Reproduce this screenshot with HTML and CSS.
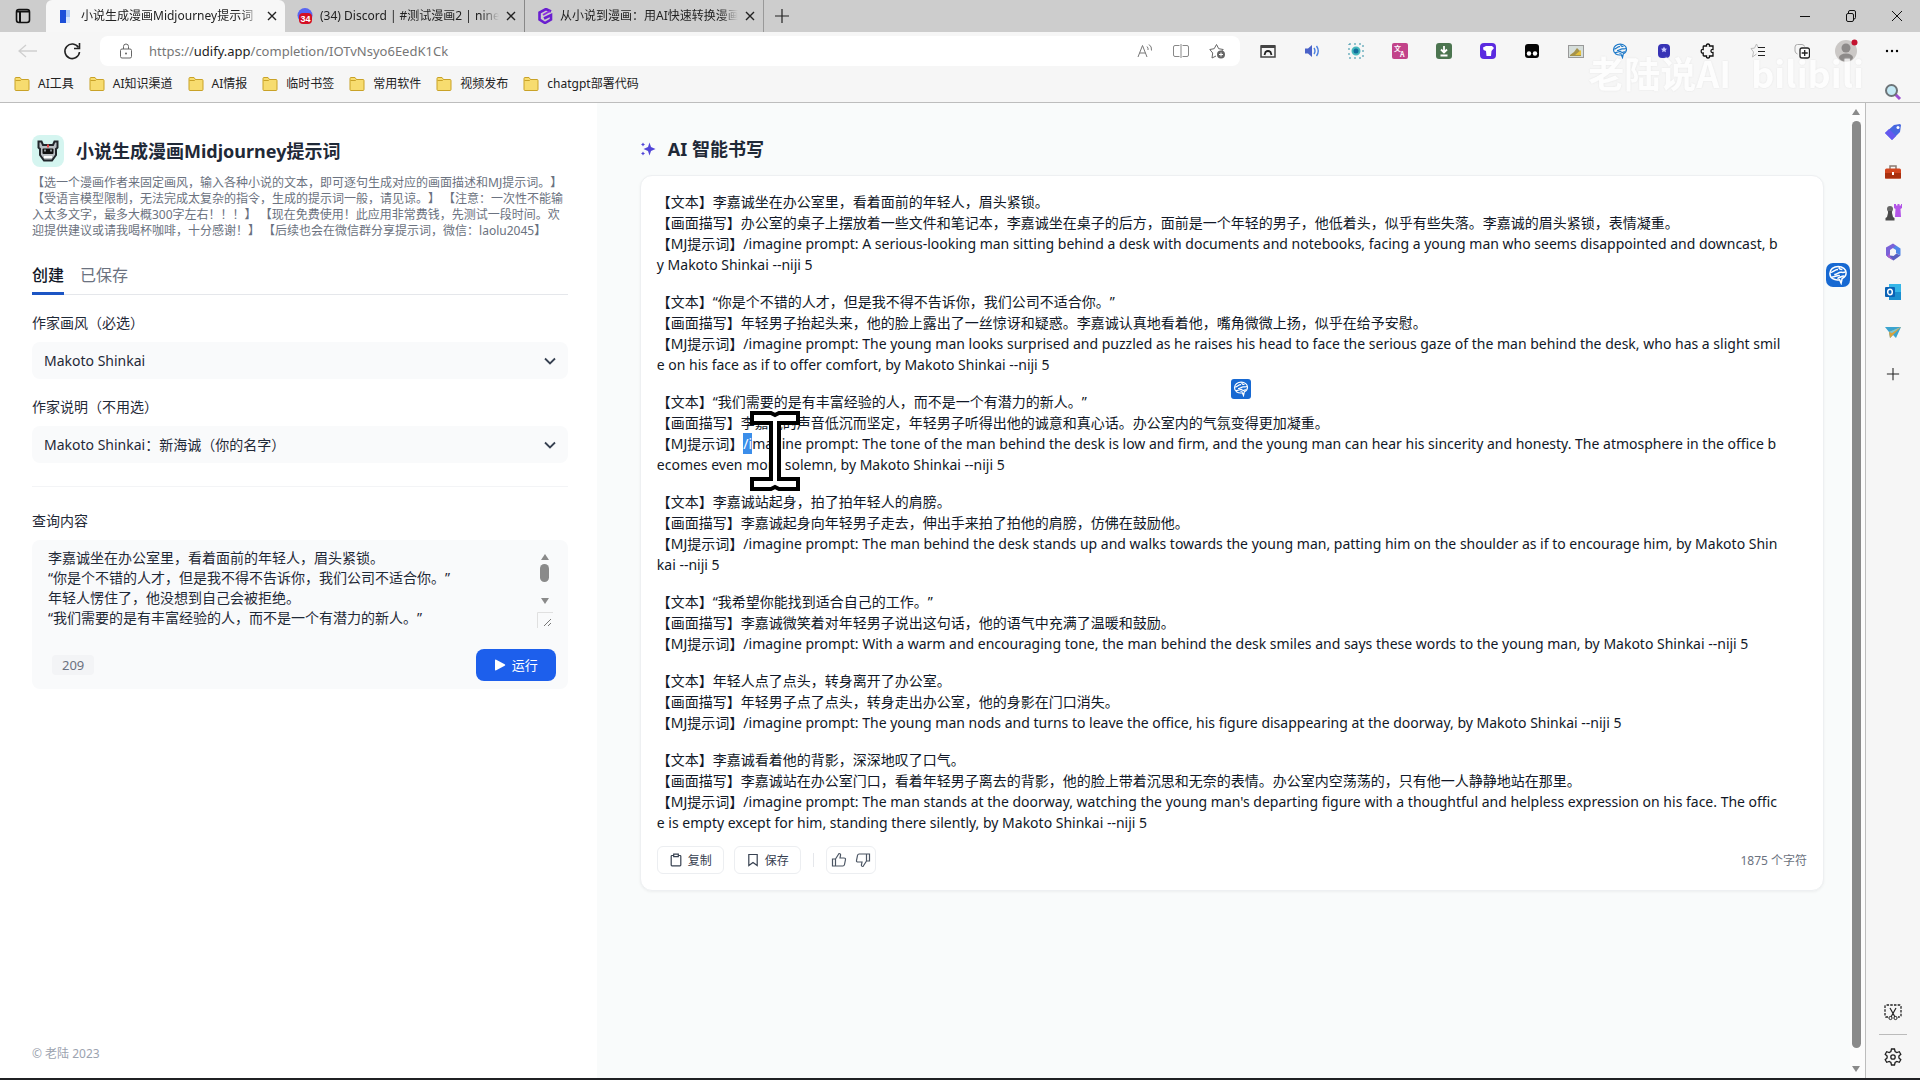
FILE: index.html
```html
<!DOCTYPE html>
<html lang="zh-CN">
<head>
<meta charset="utf-8">
<title>小说生成漫画Midjourney提示词</title>
<link rel="stylesheet" href="styles.css">
</head>
<body>
<svg class="defs" aria-hidden="true">
  <symbol id="folder" viewBox="0 0 16 16"><path d="M1 2.500q0-1 1-1h4l1.500 2h6.500q1 0 1 1v9q0 1-1 1H2q-1 0-1-1z" fill="#f7dc6f" stroke="#c9a227"/><path d="M1.500 4.500h5l1-1" fill="none" stroke="#c9a227"/></symbol>
  <symbol id="close" viewBox="0 0 16 16"><path d="M4 4l8 8M12 4l-8 8" stroke="#222" stroke-width="1.400"/></symbol>
  <symbol id="plus" viewBox="0 0 16 16"><path d="M8 1v14M1 8h14" stroke="#222" stroke-width="1.200"/></symbol>
  <symbol id="chevron" viewBox="0 0 16 16"><path d="M3 5.500l5 5 5-5" fill="none" stroke="#374151" stroke-width="1.800"/></symbol>
  <symbol id="brain" viewBox="0 0 16 16"><path d="M10.500 14.500L9.300 11.800C5 12.600 1.500 10.500 1.500 6.800 1.500 3.500 4.500 1.200 8.200 1.200c3.600 0 6.300 2.200 6.300 5 0 2.300-1.500 3.800-3.200 4.600z" fill="none" stroke="currentColor" stroke-width="1.200"/><path d="M2 6c2 0 3.500-2.500 6-2.300M5 7.500c2 .3 3.500-2 5.500-1.700 1.300.2 2 .4 3.500-.3M3 9.500c2 .5 4-1.500 6.500-1M7.500 10.500c1.500.2 3-1.800 5.500-1.700M9 1.500c-.5 1.500.5 2 2.500 2" fill="none" stroke="currentColor" stroke-width="1.200"/></symbol>
</svg>

<header class="chrome">
  <div class="tabstrip">
    <button class="icon-btn workspace" aria-label="标签页操作"><svg viewBox="0 0 16 16"><rect x="1.500" y="1.500" width="13" height="13" rx="2.500" fill="none" stroke="#111" stroke-width="1.600"/><path d="M2 3.500h12M5 4v10" stroke="#111" stroke-width="2"/></svg></button>
    <div class="tab active">
      <svg viewBox="0 0 16 16"><path d="M2 2h6v13H2z" fill="#1d4fd8"/><path d="M8 2h4v7H8z" fill="#a9c8f7"/><path d="M8 9h4v6H8z" fill="#dbe8fb"/></svg>
      <span class="tab-title">小说生成漫画Midjourney提示词</span>
      <button class="icon-btn" aria-label="关闭"><svg><use href="#close"/></svg></button>
    </div>
    <div class="tab">
      <svg viewBox="0 0 16 16"><circle cx="8" cy="7.500" r="7.500" fill="#5865f2"/><rect x="2" y="5" width="13" height="11" rx="4" fill="#d40f24"/><text x="3.500" y="14" class="badge-text">34</text></svg>
      <span class="tab-title">(34) Discord | #测试漫画2 | nineB</span>
      <button class="icon-btn" aria-label="关闭"><svg><use href="#close"/></svg></button>
    </div>
    <div class="tab">
      <svg viewBox="0 0 16 16"><path d="M14 3.500L9 1 2.500 4.500v7L8 15l6-3.500V7L7 10.500" fill="none" stroke="#6a1fd0" stroke-width="2.600"/><path d="M6 7l7-4" stroke="#8e2de2" stroke-width="2"/></svg>
      <span class="tab-title">从小说到漫画：用AI快速转换漫画</span>
      <button class="icon-btn" aria-label="关闭"><svg><use href="#close"/></svg></button>
    </div>
    <button class="icon-btn new-tab" aria-label="新建标签页"><svg><use href="#plus"/></svg></button>
    <div class="window-controls">
      <button class="icon-btn" aria-label="最小化"><svg viewBox="0 0 16 16"><path d="M3 8.500h10" stroke="#111"/></svg></button>
      <button class="icon-btn" aria-label="还原"><svg viewBox="0 0 16 16"><rect x="3.500" y="5.500" width="7" height="8" rx="1.500" fill="none" stroke="#111"/><path d="M5.500 5V4q0-1.500 1.500-1.500h4q1.500 0 1.500 1.500v5.500q0 1.500-1.500 1.500" fill="none" stroke="#111"/></svg></button>
      <button class="icon-btn" aria-label="关闭窗口"><svg viewBox="0 0 16 16"><path d="M3 3l10 10M13 3L3 13" stroke="#111"/></svg></button>
    </div>
  </div>

  <div class="toolbar">
    <button class="icon-btn" aria-label="后退"><svg viewBox="0 0 20 20"><path d="M1 10h18M8 4l-7 6 7 6" fill="none" stroke="#cfcfcf" stroke-width="1.300"/></svg></button>
    <button class="icon-btn" aria-label="刷新"><svg viewBox="0 0 20 20"><path d="M16.500 6.500A7.300 7.300 0 1 0 17.500 11" fill="none" stroke="#222" stroke-width="1.600"/><path d="M17.500 2v5.500h-5.500" fill="none" stroke="#222" stroke-width="1.600"/></svg></button>
    <div class="address">
      <svg viewBox="0 0 16 16"><rect x="2.500" y="6" width="11" height="9" rx="1.500" fill="none" stroke="#666"/><path d="M5.500 6V3.500a2.500 2.500 0 0 1 5 0V6" fill="none" stroke="#666"/><circle cx="8" cy="10.500" r="1" fill="#666"/></svg>
      <a class="url" href="https://udify.app/completion/IOTvNsyo6EedK1Ck">https://<b>udify.app</b>/completion/IOTvNsyo6EedK1Ck</a>
      <div class="address-actions">
        <svg viewBox="0 0 16 16"><path d="M1 14L5.500 2.500 10 14M2.600 10h5.800M10 3.500q1.500 1.500 1 3.500M12 1.500q3 2 2.500 6" fill="none" stroke="#777"/></svg>
        <svg viewBox="0 0 16 16"><path d="M6.500 2.500H2q-1.500 0-1.500 1.500v8q0 1.500 1.500 1.500h4.500M9.500 2.500H14q1.500 0 1.500 1.500v8q0 1.500-1.500 1.500H9.500M8 1v14" fill="none" stroke="#888"/></svg>
        <svg viewBox="0 0 16 16"><path d="M7 13L3 15l.7-5L.8 6.500l4.400-.8L7.500 1.500l2.200 4.200 4.500.8-2 2" fill="none" stroke="#666"/><circle cx="12" cy="11.500" r="4" fill="#666"/><path d="M12 9.500v4M10 11.500h4" stroke="#fff"/></svg>
      </div>
    </div>
    <div class="extensions">
      <svg viewBox="0 0 16 16"><path d="M1 3h14v11H1z" fill="none" stroke="#444" stroke-width="1.500"/><path d="M1 3.500h14" stroke="#444" stroke-width="3"/><path d="M4.500 12l1-3q2.500-2 5 0l1 3" fill="none" stroke="#222" stroke-width="1.800"/></svg>
      <svg viewBox="0 0 16 16"><path d="M1 5.500h3L8 2v12l-4-3.500H1z" fill="#4a62c8"/><path d="M10 5q2 3 0 6M12.500 3q3.500 5 0 10" fill="none" stroke="#4a7fe0" stroke-width="1.400"/></svg>
      <svg viewBox="0 0 16 16"><rect x="1" y="1" width="14" height="14" fill="none" stroke="#2e8fa5" stroke-dasharray="2 3"/><circle cx="8" cy="8" r="3.500" fill="#126e9c" stroke="#45b7bd" stroke-width="2"/></svg>
      <svg viewBox="0 0 16 16"><rect width="16" height="16" rx="2" fill="#c2438a"/><text x="2" y="8" class="glyph-sm">文</text><text x="8" y="14" class="glyph-sm">A</text></svg>
      <svg viewBox="0 0 16 16"><rect width="16" height="16" rx="3" fill="#4c7550"/><path d="M8 3v6M5 6.500l3 3 3-3M4.500 12.500h7" fill="none" stroke="#fff" stroke-width="1.800"/></svg>
      <svg viewBox="0 0 16 16"><rect width="16" height="16" rx="4" fill="#5b2be0"/><path d="M3 4.500L6 3h6l2 2-2.500 3-.5 5H6.500L6 8 3.500 7z" fill="#fff"/></svg>
      <svg viewBox="0 0 16 16"><rect x="1" y="1" width="14" height="14" rx="3" fill="#050505"/><circle cx="5" cy="10.500" r="2.200" fill="#fff"/><circle cx="11" cy="10.500" r="2.200" fill="#fff"/></svg>
      <svg viewBox="0 0 16 16"><rect x=".5" y="2.500" width="15" height="12" fill="#d6dedb" stroke="#999"/><path d="M2 12l4-3 3-4 4 4v4H2z" fill="#a5924a"/><path d="M7 12l6-5v5z" fill="#e3c03b"/></svg>
      <svg class="blue"><use href="#brain"/></svg>
      <svg viewBox="0 0 16 16"><rect x="2" y="1" width="12" height="14" rx="4" fill="#3733b5"/><path d="M8 3.500l1 2 2 .3-1.500 1.400.4 2L8 8.300l-1.900.9.400-2L5 5.800l2-.3z" fill="#c9c8ff"/></svg>
      <svg viewBox="0 0 16 16"><path d="M4 3h2.500q-.3-2 1.500-2t1.500 2H13v3.500q-2-.3-2 1.500t2 1.500V13H9.500q.3 2-1.500 2t-1.500-2H4q-.8 0-.8-.8V10q-2 .3-2-1.800t2-1.700V3.800Q3.200 3 4 3z" fill="none" stroke="#111" stroke-width="1.300"/></svg>
      <svg class="after-divider" viewBox="0 0 16 16"><path d="M6.500 11L2.500 14l1-5L1 5.500l3.500-.4L6.500 1l1.800 4" fill="none" stroke="#bbb"/><path d="M8 4.500h7M8 8.500h7M8 12.500h7" stroke="#222" stroke-width="1.200"/></svg>
      <svg viewBox="0 0 16 16"><path d="M3.500 11Q1 10 1 8V4q0-2.500 2.500-2.500H8q2 0 2.500 2" fill="none" stroke="#aaa"/><rect x="6" y="5" width="9.500" height="10" rx="2" fill="#fff" stroke="#222" stroke-width="1.300"/><path d="M10.700 7v6M7.700 10h6" stroke="#222" stroke-width="1.300"/></svg>
      <svg class="avatar" viewBox="0 0 24 24"><circle cx="12" cy="12" r="11" fill="#cbc8c6"/><circle cx="12" cy="9" r="4.500" fill="#8d8a89"/><ellipse cx="12" cy="18.500" rx="7" ry="4" fill="#8d8a89"/><circle cx="20.500" cy="3.500" r="3" fill="#c4122f"/></svg>
      <svg viewBox="0 0 16 16"><circle cx="3" cy="8" r="1.200"/><circle cx="8" cy="8" r="1.200"/><circle cx="13" cy="8" r="1.200"/></svg>
    </div>
  </div>

  <nav class="bookmarks">
    <a href="#"><svg><use href="#folder"/></svg>AI工具</a>
    <a href="#"><svg><use href="#folder"/></svg>AI知识渠道</a>
    <a href="#"><svg><use href="#folder"/></svg>AI情报</a>
    <a href="#"><svg><use href="#folder"/></svg>临时书签</a>
    <a href="#"><svg><use href="#folder"/></svg>常用软件</a>
    <a href="#"><svg><use href="#folder"/></svg>视频发布</a>
    <a href="#"><svg><use href="#folder"/></svg>chatgpt部署代码</a>
  </nav>
  <div class="watermark"><span>老陆说AI</span><span class="site">bilibili</span></div>
</header>

<div class="window-body">
  <div class="page">
    <section class="panel">
      <div class="app-head">
        <div class="app-icon"><svg viewBox="0 0 24 24"><path d="M2.500 2.500h3L7 6h10l1.500-3.500h3v6L20 10v6l-4 5.500H8L4 16v-6L2.500 8.500z" fill="#b9bec2" stroke="#22262b" stroke-width="2"/><rect x="6.500" y="9.500" width="11" height="5.500" rx="1" fill="#111"/><path d="M12 5.500v3" stroke="#e64646" stroke-width="2"/><path d="M8 18h8" stroke="#fff" stroke-width="2"/><path d="M8 10.500h2v2H8zM14 10.500h2v2h-2z" fill="#8a9095"/></svg></div>
        <h1>小说生成漫画Midjourney提示词</h1>
      </div>
      <p class="desc">【选一个漫画作者来固定画风，输入各种小说的文本，即可逐句生成对应的画面描述和MJ提示词。】<br>【受语言模型限制，无法完成太复杂的指令，生成的提示词一般，请见谅。】 【注意：一次性不能输<br>入太多文字，最多大概300字左右！！！】 【现在免费使用！此应用非常费钱，先测试一段时间。欢<br>迎提供建议或请我喝杯咖啡，十分感谢！】 【后续也会在微信群分享提示词，微信：laolu2045】</p>
      <div class="modes"><button class="current">创建</button><button>已保存</button></div>
      <form class="form">
        <label for="style">作家画风（必选）</label>
        <div class="select"><select id="style"><option>Makoto Shinkai</option></select><svg><use href="#chevron"/></svg></div>
        <label for="about">作家说明（不用选）</label>
        <div class="select"><select id="about"><option>Makoto Shinkai：新海诚（你的名字）</option></select><svg><use href="#chevron"/></svg></div>
        <hr>
        <label for="query">查询内容</label>
        <div class="query">
          <div class="query-text">
            <textarea id="query" rows="4">李嘉诚坐在办公室里，看着面前的年轻人，眉头紧锁。
“你是个不错的人才，但是我不得不告诉你，我们公司不适合你。”
年轻人愣住了，他没想到自己会被拒绝。
“我们需要的是有丰富经验的人，而不是一个有潜力的新人。”</textarea>
            <div class="query-scroll"><i class="up"></i><i class="thumb"></i><i class="down"></i><svg viewBox="0 0 16 16"><path d="M.5 16V.5H16" fill="none" stroke="#e0e0e0"/><path d="M7 14l7-7M11 14l3-3" stroke="#777"/></svg></div>
          </div>
          <div class="query-foot"><span class="count">209</span><button type="button" class="run"><svg viewBox="0 0 12 12"><path d="M1 1.500q0-1.300 1.200-.7l8.500 4.500q1.200.7 0 1.400l-8.500 4.500Q1 11.800 1 10.500z" fill="#fff"/></svg>运行</button></div>
        </div>
      </form>
      <footer>© 老陆 2023</footer>
    </section>

    <main class="result">
      <h2><svg viewBox="0 0 16 16"><path d="M9.500 1.500l1.500 4.500 4.500 2-4.500 2-1.500 4.500L8 10 3.500 8 8 6z" fill="#5145d8"/><path d="M3 1.500l.7 1.300 1.300.7-1.300.7L3 5.500l-.7-1.300L1 3.500l1.300-.7zM3 10.500l.7 1.300 1.300.7-1.300.7-.7 1.300-.7-1.300-1.300-.7 1.300-.7z" fill="#5145d8"/></svg>AI 智能书写</h2>
      <article class="card">
        <p>【文本】李嘉诚坐在办公室里，看着面前的年轻人，眉头紧锁。<br>【画面描写】办公室的桌子上摆放着一些文件和笔记本，李嘉诚坐在桌子的后方，面前是一个年轻的男子，他低着头，似乎有些失落。李嘉诚的眉头紧锁，表情凝重。<br>【MJ提示词】/imagine prompt: A serious-looking man sitting behind a desk with documents and notebooks, facing a young man who seems disappointed and downcast, b<br>y Makoto Shinkai --niji 5</p>
        <p>【文本】“你是个不错的人才，但是我不得不告诉你，我们公司不适合你。”<br>【画面描写】年轻男子抬起头来，他的脸上露出了一丝惊讶和疑惑。李嘉诚认真地看着他，嘴角微微上扬，似乎在给予安慰。<br>【MJ提示词】/imagine prompt: The young man looks surprised and puzzled as he raises his head to face the serious gaze of the man behind the desk, who has a slight smil<br>e on his face as if to offer comfort, by Makoto Shinkai --niji 5</p>
        <p>【文本】“我们需要的是有丰富经验的人，而不是一个有潜力的新人。”<br>【画面描写】李嘉诚的声音低沉而坚定，年轻男子听得出他的诚意和真心话。办公室内的气氛变得更加凝重。<br>【MJ提示词】<mark>/i</mark>magine prompt: The tone of the man behind the desk is low and firm, and the young man can hear his sincerity and honesty. The atmosphere in the office b<br>ecomes even more solemn, by Makoto Shinkai --niji 5</p>
        <p>【文本】李嘉诚站起身，拍了拍年轻人的肩膀。<br>【画面描写】李嘉诚起身向年轻男子走去，伸出手来拍了拍他的肩膀，仿佛在鼓励他。<br>【MJ提示词】/imagine prompt: The man behind the desk stands up and walks towards the young man, patting him on the shoulder as if to encourage him, by Makoto Shin<br>kai --niji 5</p>
        <p>【文本】“我希望你能找到适合自己的工作。”<br>【画面描写】李嘉诚微笑着对年轻男子说出这句话，他的语气中充满了温暖和鼓励。<br>【MJ提示词】/imagine prompt: With a warm and encouraging tone, the man behind the desk smiles and says these words to the young man, by Makoto Shinkai --niji 5</p>
        <p>【文本】年轻人点了点头，转身离开了办公室。<br>【画面描写】年轻男子点了点头，转身走出办公室，他的身影在门口消失。<br>【MJ提示词】/imagine prompt: The young man nods and turns to leave the office, his figure disappearing at the doorway, by Makoto Shinkai --niji 5</p>
        <p>【文本】李嘉诚看着他的背影，深深地叹了口气。<br>【画面描写】李嘉诚站在办公室门口，看着年轻男子离去的背影，他的脸上带着沉思和无奈的表情。办公室内空荡荡的，只有他一人静静地站在那里。<br>【MJ提示词】/imagine prompt: The man stands at the doorway, watching the young man's departing figure with a thoughtful and helpless expression on his face. The offic<br>e is empty except for him, standing there silently, by Makoto Shinkai --niji 5</p>
        <div class="actions">
          <button class="action"><svg viewBox="0 0 14 14"><path d="M4.500 2.500H3q-.8 0-.8.800v8.700q0 .8.800.8h8q.8 0 .8-.8V3.300q0-.8-.8-.8H9.500M4.700 1.200h4.600v2.500H4.700z" fill="none" stroke="#374151" stroke-width="1.200"/></svg>复制</button>
          <button class="action"><svg viewBox="0 0 14 14"><path d="M2.800 1.500h8.400v11L7 9.500l-4.200 3z" fill="none" stroke="#374151" stroke-width="1.200"/></svg>保存</button>
          <span class="sep"></span>
          <div class="votes">
            <button aria-label="赞"><svg viewBox="0 0 16 16"><path d="M1.500 7h3v7h-3zM4.500 7L8 1.500q2 0 1.500 2L9 6h4q1.700 0 1.500 1.500l-1 5Q13.200 14 11.800 14H4.500" fill="none" stroke="#4b5563" stroke-width="1.200"/></svg></button>
            <button aria-label="踩"><svg viewBox="0 0 16 16"><path d="M14.500 9h-3V2h3zM11.500 9L8 14.500q-2 0-1.500-2L7 10H3q-1.700 0-1.500-1.500l1-5Q2.800 2 4.200 2h7.300" fill="none" stroke="#4b5563" stroke-width="1.200"/></svg></button>
          </div>
          <span class="chars">1875 个字符</span>
        </div>
        <svg class="ibeam" viewBox="0 0 50 80"><path d="M2 2h19l4 2 4-2h19v10H29v56h19v10H29l-4-2-4 2H2V68h19V12H2z" fill="#fff" stroke="#000" stroke-width="4"/></svg>
        <span class="ai-pop"><svg><use href="#brain"/></svg></span>
      </article>
      <span class="ai-float"><svg><use href="#brain"/></svg></span>
    </main>
    <div class="scrollbar"><i class="up"></i><i class="thumb"></i><i class="down"></i></div>
  </div>

  <aside class="sidebar">
    <svg viewBox="0 0 18 18"><path d="M11 11l5 5" stroke="#9b4fd0" stroke-width="3"/><circle cx="7.500" cy="7.500" r="5.500" fill="#c4e9f5" stroke="#6d7478" stroke-width="2"/></svg>
    <svg viewBox="0 0 18 18"><path d="M10 2l6-1 1 1-1 7-8 8-7-7z" fill="#4768e0"/><path d="M1 10l4-4 7 7-4 4z" fill="#6558ef"/><circle cx="14" cy="4.500" r="1.500" fill="#fff"/></svg>
    <svg viewBox="0 0 18 18"><path d="M6 6V3h6v3" fill="none" stroke="#8a7a70" stroke-width="1.500"/><rect x="1" y="5.500" width="16" height="10" rx="1.500" fill="#d2451e"/><path d="M1 10h16v5.500H1z" fill="#a9300f"/><path d="M8 9h2v3H8z" fill="#fff"/></svg>
    <svg viewBox="0 0 18 18"><path d="M10 1h2v1.500h1.500V1h2v1.500H17V1h1v4l-1.500 1L17 14h-6l.5-8L10 5z" fill="#b455e8"/><circle cx="6" cy="6" r="3" fill="#666"/><path d="M4 8h4v2l1 4 1.500 1v2.500h-9V15L3 14l1-4z" fill="#4a4a4a"/></svg>
    <svg viewBox="0 0 18 18"><path d="M9 .5L2 4.500v8l4 2.500V7l3-2 3 1V2.500z" fill="#7a62d8"/><path d="M12 2.500l4.500 3v7L12 10V7L9 5z" fill="#4f86e8"/><path d="M16.500 12.500L9.500 17.500 3 13.500l3.500-1 3 .5 3-2.500z" fill="#5a5fc0"/><path d="M3 13.500L6 10v3.500l3.500 4z" fill="#a860d0"/></svg>
    <svg viewBox="0 0 18 18"><path d="M5 1h12v16H5z" fill="#35b6e8"/><path d="M5 9h12v8H5z" fill="#1a8fd0"/><rect x="1" y="4" width="10" height="10" rx="1" fill="#0a62b5"/><ellipse cx="6" cy="9" rx="2.300" ry="2.800" fill="none" stroke="#fff" stroke-width="1.500"/></svg>
    <svg viewBox="0 0 18 18"><path d="M1 4h16L12 15l-3-3-3 3-1-6z" fill="#3ba4cf"/><path d="M5 9l12-5-8 8-3 3z" fill="#d9a23c"/><path d="M5 9l12-5-9 6z" fill="#78c8dc"/></svg>
    <svg class="add"><use href="#plus"/></svg>
    <div class="sidebar-end">
      <svg viewBox="0 0 18 18"><path d="M4 14H2.500Q1 14 1 12.500v-9Q1 2 2.500 2h13Q17 2 17 3.500v9q0 1.500-1.500 1.500H14" fill="none" stroke="#222" stroke-width="1.300" stroke-dasharray="2.500 1.200"/><path d="M6 5l5 9M12 5l-5 9" stroke="#222" stroke-width="1.200"/><circle cx="6.500" cy="15" r="1.600" fill="none" stroke="#222"/><circle cx="11.500" cy="15" r="1.600" fill="none" stroke="#222"/></svg>
      <hr>
      <svg viewBox="0 0 18 18"><path d="M7.500 1h3l.6 2.500 1.700 1 2.500-.8 1.500 2.600-1.900 1.800v1.800l1.900 1.800-1.500 2.600-2.500-.8-1.700 1-.6 2.500h-3l-.6-2.500-1.700-1-2.500.8-1.500-2.600 1.900-1.800V8.100L1.200 6.300l1.500-2.600 2.500.8 1.700-1z" fill="none" stroke="#222" stroke-width="1.300"/><circle cx="9" cy="9" r="2.200" fill="none" stroke="#222" stroke-width="1.300"/></svg>
    </div>
  </aside>
</div>
<div class="taskbar-edge"></div>
</body>
</html>
```
FILE: styles.css
```css
* { box-sizing: border-box; }

body {
  margin: 0;
  min-height: 100vh;
  display: flex;
  flex-direction: column;
  font: 14px/20px "Noto Sans", "Noto Sans CJK SC", sans-serif;
  color: #1f2937;
  background: #f6f6f6;
  text-spacing-trim: space-all;
}

button, select, textarea { font: inherit; color: inherit; border: 0; background: none; padding: 0; margin: 0; }
h1, h2, p { margin: 0; }
a { color: inherit; text-decoration: none; }
svg { display: block; width: 16px; height: 16px; flex: none; }
.defs { position: absolute; width: 0; height: 0; }
.icon-btn { display: flex; align-items: center; justify-content: center; }

/* Browser frame */
.chrome { position: relative; font-size: 12px; line-height: 16px; color: #222; border-bottom: 1px solid #bdbdbd; }
.tabstrip { display: flex; height: 32px; background: #cdcdcd; }
.workspace { width: 46px; }
.tab { display: flex; align-items: center; gap: 7px; width: 239px; padding: 0 5px 0 12px; }
.tab .icon-btn { margin-left: -3px; }
.tab + .tab + .tab { border-left: 1px solid #888; }
.new-tab { border-left: 1px solid #999; width: 36px; }
.tab.active { background: #f7f7f7; border-radius: 6px 6px 0 0; }
.tab-title { flex: 1; overflow: hidden; white-space: nowrap; mask-image: linear-gradient(90deg, #000 90%, transparent); }
.badge-text { font: bold 9px "Liberation Sans", sans-serif; fill: #fff; }
.glyph-sm { font: bold 7px "Noto Sans CJK SC", sans-serif; fill: #fff; }
.window-controls { display: flex; margin-left: auto; }
.window-controls .icon-btn { width: 46px; }

.toolbar { display: flex; align-items: center; height: 38px; padding: 0 20px 0 18px; }
.toolbar > .icon-btn { width: 20px; margin-right: 24px; }
.toolbar > .icon-btn svg { width: 20px; height: 20px; }
.address { flex: 1; display: flex; align-items: center; gap: 15px; height: 30px; padding: 0 15px 0 18px; margin-left: -6px; background: #fff; border-radius: 8px; }
.url { font-size: 13px; color: #767676; }
.url b { font-weight: 400; color: #222; }
.address-actions { display: flex; gap: 20px; margin-left: auto; }
.extensions { display: flex; align-items: center; gap: 28px; padding-left: 20px; }
.extensions .blue { color: #1c78c8; }
.after-divider { margin-left: 6px; }
.avatar { width: 24px; height: 24px; margin: 0 -4px; }
.extensions > :last-child { margin-left: 2px; }

.bookmarks { display: flex; align-items: center; gap: 15px; height: 32px; padding: 0 14px 4px; }
.bookmarks a { display: flex; align-items: center; gap: 8px; }
.watermark { position: absolute; right: 56px; top: 52px; display: flex; gap: 20px; font: 700 36px/40px "Noto Sans CJK SC", sans-serif; color: #fff; opacity: .8; text-shadow: 0 0 2px #ddd; pointer-events: none; }

.window-body { flex: 1; display: flex; }
.page { flex: 1; display: flex; background: #f9fbfb; border-right: 1px solid #bdbdbd; }

/* Input panel */
.panel { width: 32%; display: flex; flex-direction: column; padding: 32px 29px 14px 32px; background: #fff; }
.app-head { display: flex; align-items: center; gap: 12px; }
.app-icon { width: 32px; height: 32px; display: grid; place-items: center; border-radius: 8px; background: #d5f5f0; }
.app-icon svg { width: 24px; height: 24px; }
h1, h2 { font-size: 18px; line-height: 28px; font-weight: 700; }
.desc { margin-top: 8px; font-size: 12px; line-height: 16px; color: #6b7280; white-space: nowrap; }
.modes { display: flex; gap: 16px; margin-top: 24px; border-bottom: 1px solid #e5e7eb; font-size: 16px; line-height: 24px; color: #6b7280; }
.modes button { padding: 0 0 5px; border-bottom: 3px solid transparent; margin-bottom: -1px; }
.modes .current { color: #111827; font-weight: 500; border-color: #1c55c4; }
.form { display: flex; flex-direction: column; margin-top: 18px; }
.form label { line-height: 20px; margin-bottom: 9px; }
.select { position: relative; margin-bottom: 18px; }
.select select { width: 100%; height: 37px; padding: 0 12px; appearance: none; background: #f9fafb; border-radius: 8px; }
.select svg { position: absolute; right: 10px; top: 11px; }
.form hr { width: 100%; margin: 5px 0 24px; border: 0; border-top: 1px solid #f3f4f6; }
.query { background: #f9fafb; border-radius: 8px; padding: 8px 12px; padding-left: 16px; }
.query-text { display: flex; padding-right: 3px; }
textarea { flex: 1; display: block; height: 81px; resize: none; overflow: hidden; line-height: 20px; outline: 0; }
.query-scroll { width: 16px; display: flex; flex-direction: column; align-items: center; padding-top: 6px; }
.up, .down { width: 0; height: 0; border: 4px solid transparent; }
.up { border-top: 0; border-bottom: 6px solid #8a8a8a; }
.down { border-bottom: 0; border-top: 6px solid #8a8a8a; }
.thumb { background: #8a8a8a; border-radius: 5px; }
.query-scroll .thumb { width: 9px; height: 18px; margin: 4px 0 16px; }
.query-scroll svg { margin-top: 8px; }
.query-foot { display: flex; align-items: center; justify-content: space-between; margin-top: 20px; padding-left: 4px; }
.count { padding: 0 10px; border-radius: 4px; background: #f3f4f6; color: #6b7280; line-height: 20px; font-size: 13px; }
.run { display: flex; align-items: center; justify-content: center; gap: 6px; width: 80px; height: 32px; border-radius: 8px; background: #1d5fec; color: #fff; font-size: 13px; }
.run svg { width: 12px; height: 12px; }
footer { margin-top: auto; font-size: 12px; line-height: 20px; color: #9ca3af; }

/* Generated text */
.result { flex: 1; min-width: 0; position: relative; padding: 32px 26px 0 43px; }
h2 { display: flex; align-items: center; gap: 12px; }
.card { position: relative; margin-top: 12px; padding: 15px 16px 16px; border: 1px solid #eef0f2; border-radius: 12px; background: #fff; box-shadow: 0 1px 3px #0000000d; color: #111827; white-space: nowrap; line-height: 21px; }
.card p { margin-bottom: 16px; }
mark { display: inline-block; height: 21px; background: #3b8eea; color: #fff; }
.actions { display: flex; align-items: center; margin-top: -3px; gap: 10px; font-size: 12px; }
.action { display: flex; align-items: center; justify-content: center; gap: 5px; width: 67px; height: 28px; border: 1px solid #eceef1; border-radius: 6px; color: #374151; }
.action svg { width: 14px; height: 14px; }
.sep { width: 1px; height: 14px; margin: 0 2px; background: #e5e7eb; }
.votes { display: flex; align-items: center; gap: 8px; height: 28px; padding: 0 4px; border: 1px solid #eceef1; border-radius: 6px; }
.chars { margin-left: auto; color: #6b7280; }
.ibeam { position: absolute; left: 109px; top: 235px; width: 50px; height: 80px; }
.ai-pop, .ai-float { position: absolute; display: grid; place-items: center; color: #fff; background: #1769d2; }
.ai-pop { left: 590px; top: 203px; width: 20px; height: 20px; border-radius: 3px; }
.ai-float { right: 0; top: 160px; width: 24px; height: 24px; border-radius: 7px; }
.ai-float svg { width: 20px; height: 20px; }

.scrollbar { width: 15px; display: flex; flex-direction: column; align-items: center; padding: 6px 3px 6px 0; background: #fcfcfc; }
.scrollbar .thumb { flex: 1; width: 9px; margin: 6px 0 18px; }

/* Edge sidebar */
.sidebar { width: 54px; display: flex; flex-direction: column; align-items: center; gap: 22px; margin-top: -22px; padding: 2px 0 12px; }
.sidebar svg { width: 18px; height: 18px; }
.sidebar .add { width: 14px; height: 14px; margin-top: 4px; }
.sidebar-end { margin-top: auto; display: flex; flex-direction: column; align-items: center; gap: 13px; }
.sidebar-end hr { width: 28px; margin: 0; border: 0; border-top: 1px solid #bbb; }
.taskbar-edge { height: 2px; background: #202124; }
```
